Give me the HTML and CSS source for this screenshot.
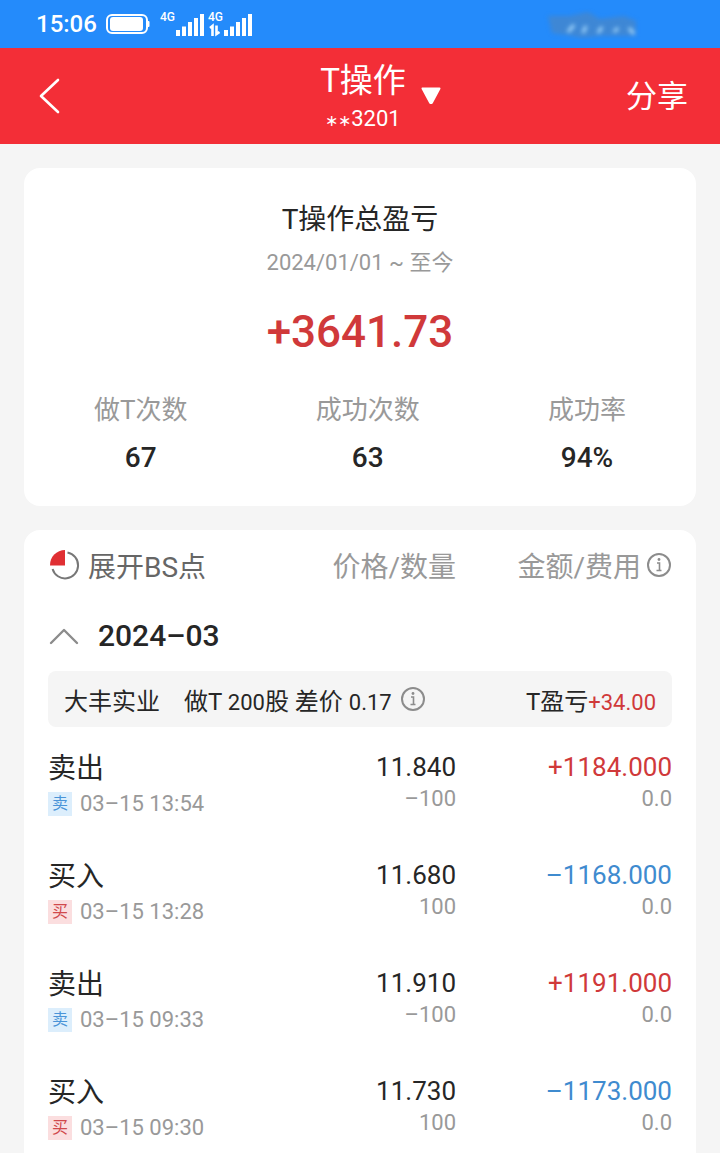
FILE: index.html
```html
<!DOCTYPE html>
<html lang="zh-CN">
<head>
<meta charset="utf-8">
<meta name="viewport" content="width=device-width, initial-scale=1">
<title>T操作</title>
<link rel="stylesheet" href="styles.css">
</head>
<body>
<div class="status">
  <span class="clock">15:06</span>
  <svg class="battery" width="44" height="20" viewBox="0 0 44 20"><rect x="1" y="1" width="40" height="18" rx="5" fill="none" stroke="#fff" stroke-width="2"/><rect x="4" y="3" width="33" height="14" rx="3" fill="#fff"/><path d="M41 7h1.500a1 1 0 0 1 1 1v4a1 1 0 0 1-1 1H41z" fill="#fff"/></svg>
  <svg class="signal" width="94" height="26" viewBox="0 0 94 26" fill="#fff">
    <g class="net"><text x="0" y="10">4G</text><text x="48" y="10">4G</text></g>
    <path d="M16 19h4v6h-4zM22 15.500h4V25h-4zM28 11h4v14h-4zM34 7h4v18h-4zM40 3h4v22h-4zM64 19h4v6h-4zM70 15.500h4V25h-4zM76 11h4v14h-4zM82 7h4v18h-4zM88 3h4v22h-4z"/>
    <path d="M50 17l2.500-2V25M56.500 14.500v8.500l3-2" fill="none" stroke="#fff" stroke-width="2.600"/>
  </svg>
  <svg class="smudge" width="104" height="32" viewBox="0 0 104 32"><g class="haze"><path d="M8 8h22l18-4 12 7 24-3 12 5v15H62l-20 2-16-3-14-2z" fill="#4a86c4" opacity=".7"/><path d="M28 24l6-7M43 25l3-7M58 25l4-6M74 24l4-4M94 26l-5-6" stroke="#a9dcff" stroke-width="3" fill="none"/></g></svg>
</div>
<header class="bar">
  <button class="back" aria-label="返回"><svg width="24" height="38" viewBox="0 0 24 38" fill="none" stroke="#fff" stroke-width="2.600" stroke-linecap="round" stroke-linejoin="round"><path d="M20 3L3 19l17 16"/></svg></button>
  <button class="account">
    <span class="names"><span class="title">T操作</span><span class="number"><span class="mask">∗∗</span>3201</span></span>
    <svg width="22" height="18" viewBox="0 0 22 18"><path d="M2.500 1.500h17L12 15.500q-1 1.200-2 0z" fill="#fff" stroke="#fff" stroke-width="2" stroke-linejoin="round"/></svg>
  </button>
  <button class="share">分享</button>
</header>
<main>
  <section class="card total">
    <h1>T操作总盈亏</h1>
    <p class="range">2024/01/01 ~ 至今</p>
    <p class="sum">+3641.73</p>
    <dl>
      <div><dt>做T次数</dt><dd>67</dd></div>
      <div><dt>成功次数</dt><dd>63</dd></div>
      <div><dt>成功率</dt><dd>94%</dd></div>
    </dl>
  </section>
  <section class="card detail">
    <table>
      <colgroup><col class="c1"><col class="c2"><col class="c3"></colgroup>
      <thead>
        <tr>
          <th><button class="expand"><svg width="32" height="32" viewBox="0 0 32 32"><path d="M19.500 3.600A13 13 0 1 1 4.600 20" fill="none" stroke="#777" stroke-width="2"/><path d="M17 1v15.500H2A15 15 0 0 1 17 1z" fill="#e02f33"/></svg>展开BS点</button></th>
          <th>价格/数量</th>
          <th><span class="fee">金额/费用<button class="info" aria-label="说明"><svg width="26" height="26" viewBox="0 0 26 26" fill="none" stroke="#8c8c8c" stroke-width="2"><circle cx="13" cy="13" r="11"/><path d="M11 11h2.500v7M10.500 18.500h5" stroke-width="1.600"/><circle cx="13" cy="7.500" r="1.400" fill="#8c8c8c" stroke="none"/></svg></button></span></th>
        </tr>
      </thead>
      <tbody>
        <tr><td colspan="3"><button class="month"><svg width="32" height="22" viewBox="0 0 32 22" fill="none" stroke="#8c8c8c" stroke-width="2.400" stroke-linecap="round" stroke-linejoin="round"><path d="M3 18L16 5l13 13"/></svg>2024–03</button></td></tr>
        <tr><td colspan="3"><div class="group"><span class="stock">大丰实业</span><span>做T <span class="num">200</span>股 差价 <span class="num">0.17</span></span><button class="info" aria-label="说明"><svg width="26" height="26" viewBox="0 0 26 26" fill="none" stroke="#8c8c8c" stroke-width="2"><circle cx="13" cy="13" r="11"/><path d="M11 11h2.500v7M10.500 18.500h5" stroke-width="1.600"/><circle cx="13" cy="7.500" r="1.400" fill="#8c8c8c" stroke="none"/></svg></button><span class="profit">T盈亏<span class="num gain">+34.00</span></span></div></td></tr>
        <tr class="trade sell"><td><p class="main">卖出</p><p class="time"><i>卖</i>03–15 13:54</p></td><td><p class="main">11.840</p><p class="sub">–100</p></td><td><p class="main cash">+1184.000</p><p class="sub">0.0</p></td></tr>
        <tr class="trade buy"><td><p class="main">买入</p><p class="time"><i>买</i>03–15 13:28</p></td><td><p class="main">11.680</p><p class="sub">100</p></td><td><p class="main cash">–1168.000</p><p class="sub">0.0</p></td></tr>
        <tr class="trade sell"><td><p class="main">卖出</p><p class="time"><i>卖</i>03–15 09:33</p></td><td><p class="main">11.910</p><p class="sub">–100</p></td><td><p class="main cash">+1191.000</p><p class="sub">0.0</p></td></tr>
        <tr class="trade buy"><td><p class="main">买入</p><p class="time"><i>买</i>03–15 09:30</p></td><td><p class="main">11.730</p><p class="sub">100</p></td><td><p class="main cash">–1173.000</p><p class="sub">0.0</p></td></tr>
      </tbody>
    </table>
  </section>
</main>
</body>
</html>
```
FILE: styles.css
```css
* { box-sizing: border-box; }
body, h1, p, dl, dd { margin: 0; }
body {
  display: flex;
  flex-direction: column;
  min-height: 100vh;
  background: #f5f5f5;
  color: #262626;
  font-family: Roboto, "Noto Sans CJK SC", sans-serif;
}
button {
  padding: 0;
  border: 0;
  background: none;
  color: inherit;
  font: inherit;
}
svg { display: block; flex: none; }

.status {
  display: flex;
  align-items: center;
  height: 48px;
  padding: 0 76px 0 36px;
  background: #248bfb;
  color: #fff;
}
.clock { font-size: 24px; font-weight: 500; }
.battery { margin-left: 9px; }
.signal { margin-left: 10px; }
.net { font-size: 12px; font-weight: 500; }
.smudge { margin-left: auto; }
.haze { filter: blur(2px); }

.bar {
  display: grid;
  grid-template-columns: 1fr auto 1fr;
  align-items: center;
  height: 96px;
  padding: 0 32px 0 38px;
  background: #f32e37;
  color: #fff;
}
.back { justify-self: start; }
.account { display: flex; align-items: center; gap: 14px; padding-left: 36px; }
.names { display: flex; flex-direction: column; align-items: center; padding-top: 6px; }
.title { font-size: 33px; line-height: 40px; }
.number { font-size: 22px; line-height: 36px; }
.mask { font-family: "Noto Sans CJK SC", sans-serif; font-size: 16px; }
.share { justify-self: end; font-size: 31px; line-height: 40px; padding-top: 2px; }

main { display: flex; flex: 1; flex-direction: column; gap: 24px; padding: 24px 24px 0; }
.card { border-radius: 16px; background: #fff; }
.total { padding: 32px 70px 26px; text-align: center; }
h1 { font-size: 28px; font-weight: 400; line-height: 40px; }
.range { color: #999; font-size: 22px; line-height: 46px; }
.sum { color: #d0393a; font-size: 44px; font-weight: 500; line-height: 92px; }
dl { display: flex; justify-content: space-between; margin-top: 6px; }
dt { color: #999; font-size: 26px; line-height: 52px; }
dd { font-size: 28px; font-weight: 500; line-height: 44px; }

.detail { flex: 1; padding: 0 24px; border-radius: 16px 16px 0 0; }
table { width: 100%; border-collapse: collapse; table-layout: fixed; }
.c2 { width: 27%; }
.c3 { width: 216px; }
th, td { padding: 0; text-align: right; }
th { height: 70px; color: #999; font-size: 28px; font-weight: 400; }
th:first-child, td:first-child { text-align: left; }
.expand { display: flex; align-items: center; gap: 8px; color: #666; }
.fee { display: flex; align-items: center; justify-content: flex-end; gap: 5px; }
.month { display: flex; align-items: center; gap: 18px; height: 71px; font-size: 30px; font-weight: 500; }
.group {
  display: flex;
  align-items: center;
  height: 56px;
  padding: 0 16px;
  border-radius: 8px;
  background: #f5f5f5;
  font-size: 24px;
}
.stock { margin-right: 24px; }
.group .info { margin-left: 8px; }
.num { font-size: 22px; }
.profit { margin-left: auto; }
.gain { color: #d0393a; }

.trade td { padding: 22px 0 16px; vertical-align: top; }
.trade:last-child td { padding-bottom: 4px; }
.main { font-size: 26px; line-height: 36px; }
td:first-child .main { font-size: 28px; line-height: 40px; }
.time { display: flex; align-items: center; gap: 8px; color: #999; font-size: 22px; line-height: 30px; }
.time i { width: 24px; font-size: 16px; font-style: normal; line-height: 24px; text-align: center; }
.sub { color: #999; font-size: 22px; line-height: 28px; }
.sell i { background: #dceefc; color: #4a94d8; }
.buy i { background: #fbdedf; color: #d0494c; }
.sell .cash { color: #d0393a; }
.buy .cash { color: #3f8bcf; }
```
